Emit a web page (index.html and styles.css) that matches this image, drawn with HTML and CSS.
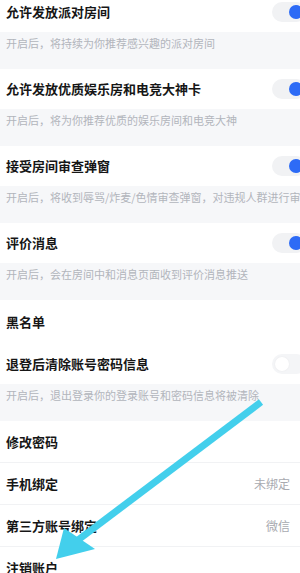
FILE: index.html
```html
<!DOCTYPE html>
<html lang="zh">
<head>
<meta charset="utf-8">
<link rel="stylesheet" href="styles.css">
</head>
<body>
<div class="page">
  <div class="row"><span class="title">允许发放派对房间</span><span class="switch on"></span></div>
  <div class="desc">开启后，将持续为你推荐感兴趣的派对房间</div>
  <div class="row"><span class="title">允许发放优质娱乐房和电竞大神卡</span><span class="switch on"></span></div>
  <div class="desc">开启后，将为你推荐优质的娱乐房间和电竞大神</div>
  <div class="row"><span class="title">接受房间审查弹窗</span><span class="switch on"></span></div>
  <div class="desc">开启后，将收到辱骂/炸麦/色情审查弹窗，对违规人群进行审查</div>
  <div class="row"><span class="title">评价消息</span><span class="switch on"></span></div>
  <div class="desc">开启后，会在房间中和消息页面收到评价消息推送</div>
  <div class="row tall"><span class="title">黑名单</span></div>
  <div class="row"><span class="title">退登后清除账号密码信息</span><span class="switch off"></span></div>
  <div class="desc">开启后，退出登录你的登录账号和密码信息将被清除</div>
  <div class="row plain"><span class="title">修改密码</span></div>
  <div class="row plain"><span class="title">手机绑定</span><span class="value">未绑定</span></div>
  <div class="row plain"><span class="title">第三方账号绑定</span><span class="value">微信</span></div>
  <div class="row plain"><span class="title">注销账户</span></div>
</div>
<svg class="arrow" width="300" height="573" viewBox="0 0 300 573">
  <line x1="261" y1="402" x2="78" y2="540" stroke="#43cfec" stroke-width="7"/>
  <polygon points="56,559 64,528 95,549" fill="#43cfec"/>
</svg>
</body>
</html>
```
FILE: styles.css
```css
html, body {
  margin: 0;
  padding: 0;
  background: #ffffff;
  overflow: hidden;
}
body {
  width: 300px;
  height: 573px;
  position: relative;
  font-family: "Noto Sans CJK SC", "Noto Sans", sans-serif;
}
.page {
  margin-top: -8px;
}
.row {
  height: 40px;
  display: flex;
  align-items: center;
  justify-content: space-between;
  padding: 0 0 0 6px;
  background: #ffffff;
}
.row.tall {
  height: 44px;
}
.row.plain {
  height: 41px;
  border-bottom: 1px solid #f1f2f4;
  padding-right: 10px;
}
.title {
  font-size: 13px;
  font-weight: 700;
  color: #161616;
  line-height: 16px;
}
.value {
  font-size: 12px;
  color: #a8aab0;
}
.desc {
  height: 37px;
  box-sizing: border-box;
  background: #f6f7f9;
  padding: 4px 0 0 6px;
  font-size: 11px;
  line-height: 14px;
  color: #b2b5bc;
  white-space: nowrap;
  overflow: hidden;
}
.switch {
  flex: none;
  position: relative;
  width: 34px;
  height: 20px;
  border-radius: 10px;
  background: #f1f2f4;
  margin-right: -6px;
}
.switch::after {
  content: "";
  position: absolute;
  top: 3px;
  width: 14px;
  height: 14px;
  border-radius: 50%;
}
.switch.on::after {
  right: 3px;
  background: #2d6bf6;
}
.switch.off {
  background: #f4f5f7;
}
.switch.off::after {
  left: 3px;
  background: #ffffff;
  box-shadow: 0 0 2px rgba(0, 0, 0, 0.06);
}
.arrow {
  position: absolute;
  left: 0;
  top: 0;
  pointer-events: none;
}
```
